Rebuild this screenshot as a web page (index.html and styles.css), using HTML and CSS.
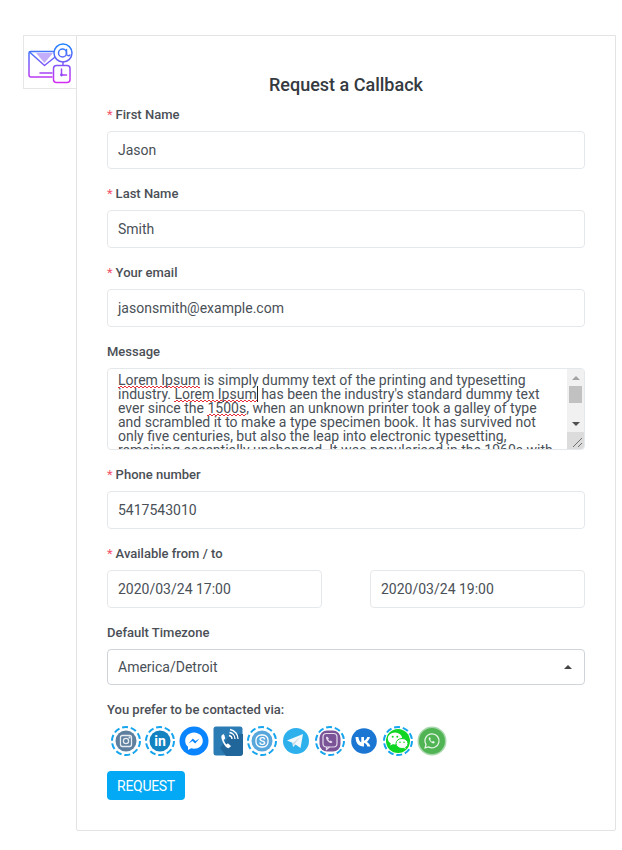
FILE: index.html
```html
<!DOCTYPE html>
<html lang="en">
<head>
<meta charset="utf-8">
<title>Request a Callback</title>
<link rel="stylesheet" href="styles.css">
</head>
<body>
<div class="page">
  <div class="logo-box">
    <svg class="logo" viewBox="0 0 48 48" fill="none" stroke-linecap="round" stroke-linejoin="round">
      <defs>
        <linearGradient id="lg2" gradientUnits="userSpaceOnUse" x1="0" y1="6" x2="0" y2="45">
          <stop offset="0" stop-color="#1f86ff"/>
          <stop offset="1" stop-color="#d52cf2"/>
        </linearGradient>
      </defs>
      <path d="M8 15h17l-8.500 10z" fill="#c4aefb" stroke="none"/>
      <g stroke="url(#lg2)" stroke-width="1.500">
        <path d="M27 13.500H2.500a1.500 1.500 0 0 0-1.500 1.500v22a2 2 0 0 0 2 2h21M1.500 14l15 13.500 10-8M12 35h12"/>
        <circle cx="35" cy="15" r="9" fill="#fff"/>
        <circle cx="34.500" cy="15" r="4"/>
        <path d="M38.500 11.500v4.500a2 2 0 0 0 3.500 1"/>
        <path d="M35 24v3"/>
        <rect x="25.500" y="27.500" width="16.500" height="17" rx="3" fill="#fff"/>
        <path d="M33.500 31v6M33.500 37h5"/>
      </g>
      <circle cx="33.500" cy="37" r="1.400" fill="#8a4cf5"/>
    </svg>
  </div>
  <main class="card">
    <h1 class="title">Request a Callback</h1>
    <div class="field">
      <label class="label"><span class="req">*</span>First Name</label>
      <div class="input">Jason</div>
    </div>
    <div class="field">
      <label class="label"><span class="req">*</span>Last Name</label>
      <div class="input">Smith</div>
    </div>
    <div class="field">
      <label class="label"><span class="req">*</span>Your email</label>
      <div class="input">jasonsmith@example.com</div>
    </div>
    <div class="field">
      <label class="label">Message</label>
      <div class="textarea">
        <div class="textarea-text"><span class="sq">Lorem Ipsum</span> is simply dummy text of the printing and typesetting industry. <span class="sq caret">Lorem Ipsum</span> has been the industry's standard dummy text ever since the <span class="sq">1500s</span>, when an unknown printer took a galley of type and scrambled it to make a type specimen book. It has survived not only five centuries, but also the leap into electronic typesetting, remaining essentially unchanged. It was popularised in the 1960s with the release of Letraset sheets.</div>
        <div class="scrollbar">
          <div class="sb-btn"><span class="tri-up"></span></div>
          <div class="sb-track"><div class="sb-thumb"></div></div>
          <div class="sb-btn"><span class="tri-down"></span></div>
          <div class="resizer">
            <svg viewBox="0 0 17 17" width="17" height="17"><path d="M15 6L6 15M15 11l-4 4" stroke="#6f6f6f" stroke-width="1"/></svg>
          </div>
        </div>
      </div>
    </div>
    <div class="field">
      <label class="label"><span class="req">*</span>Phone number</label>
      <div class="input">5417543010</div>
    </div>
    <div class="field">
      <label class="label"><span class="req">*</span>Available from / to</label>
      <div class="dates">
        <div class="input">2020/03/24 17:00</div>
        <div class="input">2020/03/24 19:00</div>
      </div>
    </div>
    <div class="field">
      <label class="label">Default Timezone</label>
      <div class="select">America/Detroit<span class="select-arrow"></span></div>
    </div>
    <div class="field contact">
      <label class="label">You prefer to be contacted via:</label>
      <div class="icons">
        <svg class="ico" viewBox="0 0 30 30"><circle class="ring" cx="15" cy="15" r="14"/><circle cx="15" cy="15" r="10.500" fill="#5f7f9f"/><rect x="9.500" y="9.500" width="11" height="11" rx="2" fill="none" stroke="#e8edf2" stroke-width="1.300"/><circle cx="15" cy="15" r="2.600" fill="none" stroke="#e8edf2" stroke-width="1.300"/><rect x="17.600" y="10.600" width="1.800" height="1.800" fill="#e8edf2"/></svg>
        <svg class="ico" viewBox="0 0 30 30"><circle class="ring" cx="15" cy="15" r="14"/><circle cx="15" cy="15" r="10.500" fill="#1282c0"/><text x="15" y="20" text-anchor="middle" class="in">in</text></svg>
        <svg class="ico" viewBox="0 0 30 30"><circle cx="15" cy="15" r="14.500" fill="#0b84ff"/><path d="M15 6.500c-5 0-8.800 3.600-8.800 8.200 0 2.500 1 4.500 2.800 6v3.300l3.100-1.700c.9.300 1.900.4 2.900.4 5 0 8.800-3.500 8.800-8 0-4.600-3.800-8.200-8.800-8.200z" fill="#fff"/><path d="M9.500 17.500l4.300-5 2.700 2.500 4-2.500-4.300 5-2.700-2.600z" fill="#0b84ff"/></svg>
        <svg class="ico" viewBox="0 0 30 30"><rect x="0.500" y="0.500" width="29" height="29" rx="2.500" fill="#2b7cb5"/><path d="M30 8v19a3 3 0 0 1-3 3H13L7 22l11-14z" fill="#20669b"/><path d="M11.500 7.500l-2.500 1.500c-1.200 1-.8 3.500.8 7 1.500 3.200 3.500 5.800 5.500 6.300l2.200-1.500c.5-.5.4-1-.1-1.400l-2-1.700c-.4-.3-.8-.3-1.200 0l-.9.700c-.8-.6-2.500-3.600-2.700-4.700l1-.5c.5-.3.600-.7.500-1.200l-.6-2.500c-.1-.5-.7-.8-1.200-.6z" fill="#fff"/><path d="M16 9.500a3.500 3.500 0 0 1 3 3.500M16.500 6.500a6.500 6.500 0 0 1 5.500 6.500M17 3.500a9.500 9.500 0 0 1 8 9.500" fill="none" stroke="#fff" stroke-width="1.300"/></svg>
        <svg class="ico" viewBox="0 0 30 30"><circle class="ring" cx="15" cy="15" r="14"/><circle cx="15" cy="15" r="10.500" fill="#58a7dc"/><rect x="9" y="9" width="12" height="12" rx="5" fill="none" stroke="#fff" stroke-width="1.300"/><text x="15" y="19" text-anchor="middle" class="sk">S</text></svg>
        <svg class="ico" viewBox="0 0 30 30"><circle cx="15" cy="15" r="13" fill="#2eb0ed"/><path d="M6 14.500l16-6.500-2.500 14-5-3.500-2.500 2.500-.7-4.200z" fill="#f2f9fd"/><path d="M11.800 17.300L19.500 10.500l-6 7.500-.5 3z" fill="#c9d9e6"/></svg>
        <svg class="ico" viewBox="0 0 30 30"><circle class="ring" cx="15" cy="15" r="14"/><rect x="4.500" y="4.500" width="21" height="21" rx="7.500" fill="#7a5497"/><rect x="8" y="7.500" width="14" height="13.500" rx="3.500" fill="none" stroke="#e7dcee" stroke-width="1.200"/><path d="M11.500 21v2.500l3-2.500" fill="none" stroke="#e7dcee" stroke-width="1.200"/><path d="M12 10.500l-1 .8c-.4 2 3 6 5.500 5.800l1-1-1.800-1.500-1 .6c-.6-.4-1.300-1.300-1.500-2l.8-.8z" fill="#e7dcee"/></svg>
        <svg class="ico" viewBox="0 0 30 30"><circle cx="15" cy="15" r="12.800" fill="#1a76d2"/><path d="M6.500 11h2.900c.3 3 1.700 5 2.900 5.300V11h2.700v3.700c1.300-.1 2.700-1.700 3.200-3.700h2.700c-.4 2.400-2 4.100-3.200 4.900 1.200.6 3 2 3.700 4.600h-3c-.6-1.900-2-3.200-3.400-3.400v3.400h-.5c-5.200 0-7.800-3.600-8-9.500z" fill="#fff"/></svg>
        <svg class="ico" viewBox="0 0 30 30"><circle class="ring" cx="15" cy="15" r="14"/><circle cx="15" cy="15" r="12" fill="#0fd623"/><ellipse cx="12" cy="12.500" rx="7.200" ry="6" fill="#fff"/><path d="M8 16.500l-.8 3 3-1.500z" fill="#fff"/><ellipse cx="19" cy="17.500" rx="6" ry="5" fill="#fff" stroke="#0fd623" stroke-width="1"/><path d="M22 21l1 2-2.800-1.200z" fill="#fff"/><circle cx="9.700" cy="10.800" r="1" fill="#0fd623"/><circle cx="14.300" cy="10.800" r="1" fill="#0fd623"/><circle cx="17" cy="16.200" r=".8" fill="#0fd623"/><circle cx="21" cy="16.200" r=".8" fill="#0fd623"/></svg>
        <svg class="ico" viewBox="0 0 30 30"><circle cx="15" cy="15" r="14.500" fill="#a9d8ac"/><circle cx="15" cy="15" r="13" fill="#50b454"/><path d="M15 7.800a7 7 0 0 0-6 10.600l-.9 3.400 3.500-.9A7 7 0 1 0 15 7.800z" fill="none" stroke="#e6f5e6" stroke-width="1.300"/><path d="M12.500 11.300l-.8.700c-.5 1.500 2.500 5.500 5 5.400l1-1c.2-.3.100-.6-.1-.7l-1.300-.7c-.3-.1-.5 0-.7.200l-.4.500c-.8-.3-1.700-1.200-2-2l.4-.5c.2-.2.200-.4.100-.6l-.6-1.200c-.1-.2-.4-.2-.6-.1z" fill="#e6f5e6"/></svg>
      </div>
    </div>
    <button class="btn" type="button">REQUEST</button>
  </main>
</div>
</body>
</html>
```

FILE: styles.css
```css
* { box-sizing: border-box; }
html, body { margin: 0; padding: 0; background: #fff; }
body { font-family: Roboto, "Liberation Sans", sans-serif; color: #495057; }
.page { display: flex; align-items: flex-start; padding: 35px 0 0 23px; width: 622px; height: 850px; overflow: hidden; }
.logo-box { width: 53px; height: 54px; border: 1px solid #e6e6e6; border-right: 0; display: flex; align-items: center; justify-content: center; flex: none; padding-left: 4px; }
.logo { width: 48px; height: 48px; display: block; flex: none; }
.card { width: 540px; height: 796px; border: 1px solid #e3e3e3; border-radius: 0 0 2px 2px; padding: 38px 30px 0; flex: none; }
.title { margin: 0 0 11px; font-size: 18px; line-height: 22px; font-weight: 500; text-align: center; color: #343a40; }
.field { margin-bottom: 17px; }
.label { display: block; font-size: 13px; line-height: 16px; font-weight: 500; color: #4b4f56; margin-bottom: 8px; }
.req { color: #f1556c; margin-right: 3px; font-weight: 400; }
.input { height: 38px; border: 1px solid #e5e8eb; border-radius: 4px; padding: 0 10px; font-size: 14px; line-height: 36px; color: #495057; }
.textarea { height: 82px; border: 1px solid #e5e8eb; border-radius: 4px; overflow: hidden; display: flex; }
.textarea-text { flex: 1; padding: 4px 10px 0; font-size: 14px; line-height: 14px; color: #495057; min-width: 0; }
.sq {
  background-image:
    repeating-linear-gradient(90deg, #e8303a 0 2px, transparent 2px 4px),
    repeating-linear-gradient(90deg, transparent 0 2px, #e8303a 2px 4px);
  background-size: 100% 1px, 100% 1px;
  background-position: 0 100%, 0 calc(100% - 1px);
  background-repeat: no-repeat;
}
.caret { border-right: 1px solid #222; }
.scrollbar { width: 17px; flex: none; background: #f1f1f1; display: flex; flex-direction: column; }
.sb-btn { height: 17px; display: flex; align-items: center; justify-content: center; flex: none; }
.tri-up { width: 0; height: 0; border-left: 4px solid transparent; border-right: 4px solid transparent; border-bottom: 4px solid #a3a3a3; }
.tri-down { width: 0; height: 0; border-left: 4px solid transparent; border-right: 4px solid transparent; border-top: 4px solid #505050; }
.sb-track { flex: 1; padding: 0 2px; }
.sb-thumb { height: 17px; background: #c1c1c1; }
.resizer { height: 17px; background: #dcdcdc; flex: none; }
.resizer svg { display: block; }
.dates { display: grid; grid-template-columns: 215px 215px; justify-content: space-between; }
.select { position: relative; height: 36px; border: 1px solid #ced4da; border-radius: 4px; padding: 0 10px; font-size: 14px; line-height: 34px; color: #495057; }
.select-arrow { position: absolute; right: 12px; top: 15px; width: 0; height: 0; border-left: 4px solid transparent; border-right: 4px solid transparent; border-bottom: 4px solid #444; }
.contact { margin-bottom: 15px; }
.icons { display: flex; gap: 4px; height: 30px; padding-left: 4px; }
.ico { width: 30px; height: 30px; flex: none; display: block; overflow: visible; }
.ring { fill: none; stroke: #15a4ee; stroke-width: 2; stroke-dasharray: 6 2.800; }
.in { font: 700 14px Roboto, "Liberation Sans", sans-serif; fill: #fff; }
.sk { font: 500 11px Roboto, "Liberation Sans", sans-serif; fill: #fff; }
.btn { display: block; width: 78px; height: 29px; border: 0; border-radius: 4px; background: #03a9f4; color: #fff; font: 400 14px Roboto, "Liberation Sans", sans-serif; letter-spacing: -0.300px; padding: 0; }
```
